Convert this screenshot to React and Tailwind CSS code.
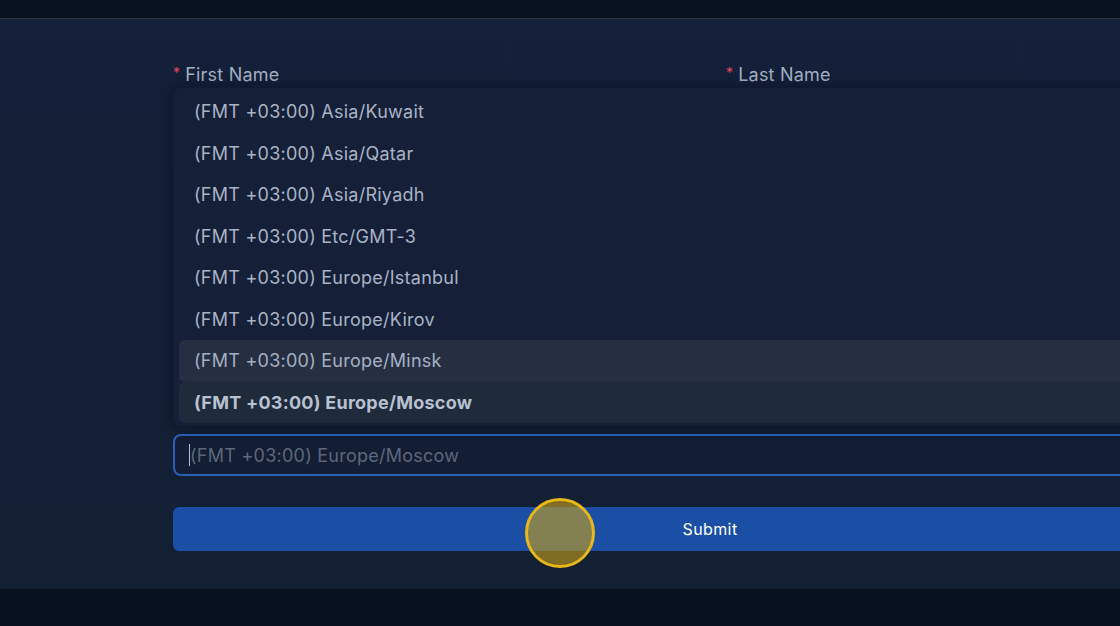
import React from 'react';

const zones = [
  'Asia/Kuwait',
  'Asia/Qatar',
  'Asia/Riyadh',
  'Etc/GMT-3',
  'Europe/Istanbul',
  'Europe/Kirov',
  'Europe/Minsk',
  'Europe/Moscow',
];

export default function App() {
  return (
    <div
      className="relative w-[1120px] h-[626px] overflow-hidden bg-[#07101f]"
      style={{ fontFamily: 'Inter, "Noto Sans", sans-serif' }}
    >
      {/* Top bar */}
      <div className="h-[19px] bg-[#081120] border-b border-[#2a3441]" />

      {/* Panel */}
      <div className="h-[570px] bg-gradient-to-b from-[#142039] to-[#131f33] pl-[173px] pt-[44px]">
        <div className="w-[1080px]">
          {/* Labels */}
          <div className="grid grid-cols-2 gap-4 text-[18px] tracking-[0.2px] text-[#a5b0c4]">
            <div className="flex items-start gap-[5px]">
              <span className="text-[#e0495f] text-[14px] leading-[20px]">*</span>
              <span className="leading-[24px]">First Name</span>
            </div>
            <div className="flex items-start gap-[5px] pl-[5px]">
              <span className="text-[#e0495f] text-[14px] leading-[20px]">*</span>
              <span className="leading-[24px]">Last Name</span>
            </div>
          </div>

          {/* Dropdown */}
          <div className="relative mt-[1px] rounded-lg bg-[#152038] shadow-[0_0_14px_rgba(5,10,25,0.55)] px-[6px] py-[3px]">
            {zones.map((z, i) => {
              const active = i === 6;
              const selected = i === 7;
              return (
                <div
                  key={z}
                  className={`h-[41.5px] flex items-center pl-[15px] rounded-md text-[18px] tracking-[0.25px] ${
                    active
                      ? 'bg-[#262f42] text-[#a5afc2]'
                      : selected
                      ? 'bg-[#1f2a3b] text-[#b8c1d2] font-bold'
                      : 'text-[#a9b3c6]'
                  }`}
                >
                  (FMT +03:00) {z}
                </div>
              );
            })}
          </div>

          {/* Input */}
          <div className="mt-[8px] h-[42px] rounded-lg border-2 border-[#2c5fb6] bg-[#131d33] flex items-center pl-[14px]">
            <span className="w-px h-[22px] bg-[#b8c1d2]" />
            <span className="text-[18px] tracking-[0.25px] text-[#5d677c]">(FMT +03:00) Europe/Moscow</span>
          </div>

          {/* Submit */}
          <button className="mt-[31px] w-[1074px] h-[44px] rounded-md bg-[#1a4fa5] text-white text-[16px] font-normal tracking-[0.4px]">
            Submit
          </button>
        </div>
      </div>

      {/* Click indicator */}
      <div className="absolute left-[525px] top-[498px] w-[70px] h-[70px] rounded-full border-[3px] border-[#e8b71a] bg-[#c9a21a]/60" />
    </div>
  );
}
